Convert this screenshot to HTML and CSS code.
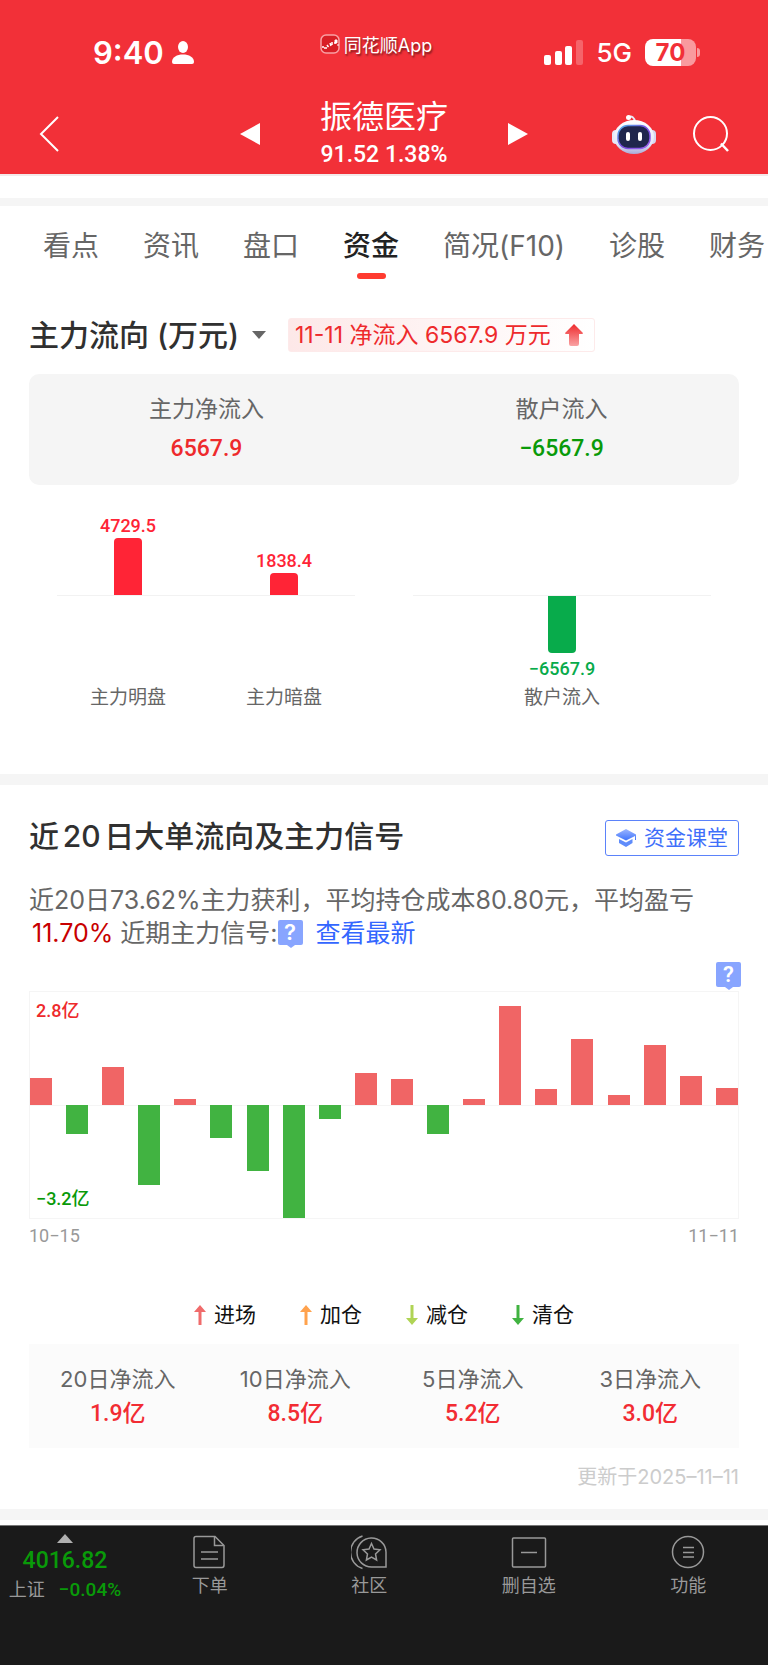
FILE: index.html
```html
<!DOCTYPE html>
<html lang="zh-CN">
<head>
    <meta charset="UTF-8">
    <meta name="viewport" content="width=device-width, initial-scale=1.0">
    <title>振德医疗 - 资金</title>
    <link rel="stylesheet" href="styles.css">
</head>
<body>
    <header class="header">
        <div class="status">
            <div class="status-left">
                <span class="time">9:40</span>
                <svg width="22" height="24" viewBox="0 0 22 24" fill="#fff">
                    <ellipse cx="11" cy="6" rx="5" ry="6"/>
                    <path d="M0 21C0 16 5 13.500 11 13.500S22 16 22 21Q22 23 20 23H2Q0 23 0 21Z"/>
                </svg>
            </div>
            <div class="app">
                <svg width="20" height="20" viewBox="0 0 20 20" fill="none">
                    <rect x="1" y="1" width="18" height="18" rx="5" fill="#d81e26" stroke="#f9a0a4" stroke-width="1.500"/>
                    <path d="M2 13h2M4 14h3M7 11l1.500 2M10 9l1 3M12 8v3M14 9h2" stroke="#fff" stroke-width="1.500"/>
                    <path d="M15 6h2v3h-2zM18 10v2" fill="#fff" stroke="#fff"/>
                </svg>
                <span>同花顺App</span>
            </div>
            <div class="status-right">
                <svg width="39" height="26" viewBox="0 0 39 26" fill="#fff">
                    <rect x="0" y="15" width="7" height="10" rx="2"/>
                    <rect x="11" y="11" width="7" height="14" rx="2"/>
                    <rect x="21" y="6" width="7" height="19" rx="2"/>
                    <rect x="32" y="0" width="7" height="25" rx="2" opacity=".25"/>
                </svg>
                <span class="net">5G</span>
                <div class="battery"><span>70</span></div>
            </div>
        </div>
        <div class="titlebar">
            <button class="icon-btn back" aria-label="返回">
                <svg width="20" height="36" viewBox="0 0 20 36" fill="none" stroke="#fff" stroke-width="2">
                    <path d="M19 1L2 18L19 35"/>
                </svg>
            </button>
            <div class="stock">
                <button class="icon-btn" aria-label="上一只">
                    <svg width="20" height="24" viewBox="0 0 20 24" fill="#fff"><path d="M20 1V23L0 12Z"/></svg>
                </button>
                <div class="stock-info">
                    <h1>振德医疗</h1>
                    <p>91.52 1.38%</p>
                </div>
                <button class="icon-btn" aria-label="下一只">
                    <svg width="20" height="24" viewBox="0 0 20 24" fill="#fff"><path d="M0 1V23L20 12Z"/></svg>
                </button>
            </div>
            <div class="actions">
                <button class="icon-btn" aria-label="智能助手">
                    <svg width="44" height="40" viewBox="0 0 44 40">
                        <defs>
                            <linearGradient id="shell" x1="0" y1="0" x2="0" y2="1">
                                <stop offset="0" stop-color="#fff"/>
                                <stop offset=".7" stop-color="#e4e6f8"/>
                                <stop offset="1" stop-color="#a9abd6"/>
                            </linearGradient>
                            <linearGradient id="rim" x1="0" y1="0" x2="1" y2="1">
                                <stop offset="0" stop-color="#4fb7e8"/>
                                <stop offset=".5" stop-color="#7a4be0"/>
                                <stop offset="1" stop-color="#9a63f0"/>
                            </linearGradient>
                        </defs>
                        <path d="M16 3Q22 1 23 8" fill="none" stroke="#e8e9f7" stroke-width="2"/>
                        <circle cx="16.500" cy="3.500" r="2.500" fill="#fff"/>
                        <rect x="0" y="16" width="8" height="14" rx="4" fill="#e6e8f8"/>
                        <rect x="36" y="16" width="8" height="14" rx="4" fill="#d5d8f0"/>
                        <ellipse cx="22" cy="23" rx="20" ry="17" fill="url(#shell)"/>
                        <rect x="6" y="11.500" width="32" height="23" rx="10" fill="#20264d" stroke="url(#rim)" stroke-width="1.500"/>
                        <rect x="14" y="18" width="4" height="9" rx="2" fill="#fff"/>
                        <rect x="26" y="18" width="4" height="9" rx="2" fill="#fff"/>
                    </svg>
                </button>
                <button class="icon-btn" aria-label="搜索">
                    <svg width="36" height="36" viewBox="0 0 36 36" fill="none" stroke="#fff" stroke-width="2">
                        <circle cx="17.500" cy="17.500" r="16.500"/>
                        <path d="M28 27.500L35 35" stroke-width="2.500"/>
                    </svg>
                </button>
            </div>
        </div>
    </header>

    <div class="strip"></div>
    <div class="band band-thin"></div>

    <nav class="tabs">
        <a href="#">看点</a>
        <a href="#">资讯</a>
        <a href="#">盘口</a>
        <a href="#" class="active">资金</a>
        <a href="#">简况(F10)</a>
        <a href="#">诊股</a>
        <a href="#">财务</a>
    </nav>

    <section class="flow">
        <div class="flow-head">
            <div class="picker">
                <select aria-label="主力流向">
                    <option>主力流向 (万元)</option>
                </select>
                <span class="caret"></span>
            </div>
            <div class="tag">
                <span>11-11 净流入 6567.9 万元</span>
                <svg width="18" height="22" viewBox="0 0 18 22">
                    <defs>
                        <linearGradient id="up" x1="0" y1="0" x2="0" y2="1">
                            <stop offset="0" stop-color="#ee2a2c"/>
                            <stop offset="1" stop-color="#f9a3a4"/>
                        </linearGradient>
                    </defs>
                    <path d="M9 0L18 9Q18 10 17 10H14V20Q14 22 12 22H6Q4 22 4 20V10H1Q0 10 0 9Z" fill="url(#up)"/>
                </svg>
            </div>
        </div>

        <div class="summary">
            <div>
                <p class="label">主力净流入</p>
                <p class="num red">6567.9</p>
            </div>
            <div>
                <p class="label">散户流入</p>
                <p class="num green">−6567.9</p>
            </div>
        </div>

        <div class="compare">
            <div class="compare-group">
                <div class="col">
                    <div class="up"><span>4729.5</span><i style="height:57px"></i></div>
                    <div class="down"></div>
                    <p>主力明盘</p>
                </div>
                <div class="col">
                    <div class="up"><span>1838.4</span><i style="height:22px"></i></div>
                    <div class="down"></div>
                    <p>主力暗盘</p>
                </div>
            </div>
            <div class="compare-group single">
                <div class="col">
                    <div class="up"></div>
                    <div class="down"><i style="height:57px"></i><span>−6567.9</span></div>
                    <p>散户流入</p>
                </div>
            </div>
        </div>
    </section>

    <div class="band"></div>

    <section class="signal">
        <div class="signal-head">
            <h2>近20日大单流向及主力信号</h2>
            <a class="course" href="#">
                <svg width="20" height="18" viewBox="0 0 20 18">
                    <defs>
                        <linearGradient id="cap" x1="0" y1="0" x2="0" y2="1">
                            <stop offset="0" stop-color="#9db6ff"/>
                            <stop offset="1" stop-color="#3f74fb"/>
                        </linearGradient>
                    </defs>
                    <path d="M10 0L20 5.500V11H19V7L10 11.500L0 6.500V5.500Z" fill="url(#cap)"/>
                    <path d="M3 10L10 13.500L16.500 10V14L10 18L3 14Z" fill="#5f8cfb"/>
                </svg>
                <span>资金课堂</span>
            </a>
        </div>

        <p class="desc">近20日73.62%主力获利，平均持仓成本80.80元，平均盈亏 <span class="profit">11.70%</span> 近期主力信号:<button class="help" aria-label="信号说明">?</button><a href="#">查看最新</a></p>

        <div class="chart">
            <span class="max">2.8亿</span>
            <span class="min">−3.2亿</span>
            <button class="help help-float" aria-label="图表说明">?</button>
            <div class="bars">
                <div class="pos"><i style="height:24%"></i></div>
                <div class="neg"><i style="height:26%"></i></div>
                <div class="pos"><i style="height:34%"></i></div>
                <div class="neg"><i style="height:71%"></i></div>
                <div class="pos"><i style="height:5%"></i></div>
                <div class="neg"><i style="height:29%"></i></div>
                <div class="neg"><i style="height:58%"></i></div>
                <div class="neg"><i style="height:100%"></i></div>
                <div class="neg"><i style="height:12%"></i></div>
                <div class="pos"><i style="height:28%"></i></div>
                <div class="pos"><i style="height:23%"></i></div>
                <div class="neg"><i style="height:26%"></i></div>
                <div class="pos"><i style="height:5%"></i></div>
                <div class="pos"><i style="height:88%"></i></div>
                <div class="pos"><i style="height:14%"></i></div>
                <div class="pos"><i style="height:58%"></i></div>
                <div class="pos"><i style="height:9%"></i></div>
                <div class="pos"><i style="height:53%"></i></div>
                <div class="pos"><i style="height:26%"></i></div>
                <div class="pos"><i style="height:15%"></i></div>
            </div>
        </div>
        <div class="dates">
            <span>10−15</span>
            <span>11−11</span>
        </div>

        <ul class="legend">
            <li class="enter"><svg width="12" height="20" viewBox="0 0 12 20"><path d="M6 0L12 7H7.500V20H4.500V7H0Z"/></svg>进场</li>
            <li class="add"><svg width="12" height="20" viewBox="0 0 12 20"><path d="M6 0L12 7H7.500V20H4.500V7H0Z"/></svg>加仓</li>
            <li class="reduce"><svg width="12" height="20" viewBox="0 0 12 20"><path d="M6 20L12 13H7.500V0H4.500V13H0Z"/></svg>减仓</li>
            <li class="clear"><svg width="12" height="20" viewBox="0 0 12 20"><path d="M6 20L12 13H7.500V0H4.500V13H0Z"/></svg>清仓</li>
        </ul>

        <table class="totals">
            <thead>
                <tr>
                    <th>20日净流入</th>
                    <th>10日净流入</th>
                    <th>5日净流入</th>
                    <th>3日净流入</th>
                </tr>
            </thead>
            <tbody>
                <tr>
                    <td>1.9亿</td>
                    <td>8.5亿</td>
                    <td>5.2亿</td>
                    <td>3.0亿</td>
                </tr>
            </tbody>
        </table>
        <p class="updated">更新于2025–11–11</p>
    </section>

    <div class="band"></div>

    <footer class="toolbar">
        <a class="index" href="#">
            <span class="index-caret"></span>
            <span class="index-value">4016.82</span>
            <span class="index-row"><span>上证</span><b>−0.04%</b></span>
        </a>
        <a class="tool" href="#">
            <svg width="36" height="36" viewBox="0 0 36 36">
                <path d="M4 2.500H23L32 11.500V31Q32 33.500 30 33.500H4Q2 33.500 2 31.500V4.500Q2 2.500 4 2.500Z"/>
                <path d="M22.500 3V11.500H31.500M9 18H26M9 25H26"/>
            </svg>
            <span>下单</span>
        </a>
        <a class="tool" href="#">
            <svg width="36" height="36" viewBox="0 0 36 36">
                <path d="M21 33H35V18A14.500 14.500 0 1 0 21 33Z"/>
                <path d="M11.500 2A17 17 0 0 0 11.500 34.500"/>
                <path d="M20.500 9.500L23 15L29 15.800L24.500 20L25.600 26L20.500 23L15.400 26L16.500 20L12 15.800L18 15Z"/>
            </svg>
            <span>社区</span>
        </a>
        <a class="tool" href="#">
            <svg width="36" height="36" viewBox="0 0 36 36">
                <rect x="1.500" y="4" width="33" height="29" rx="1"/>
                <path d="M10 18.500H26"/>
            </svg>
            <span>删自选</span>
        </a>
        <a class="tool" href="#">
            <svg width="36" height="36" viewBox="0 0 36 36">
                <circle cx="18" cy="18" r="15.500"/>
                <path d="M13 13.500H24M13 18.500H24M13 23H24"/>
            </svg>
            <span>功能</span>
        </a>
    </footer>
</body>
</html>
```
FILE: styles.css
```css
*{
    margin: 0;
    padding: 0;
    box-sizing: border-box;
}
body{
    display: flex;
    flex-direction: column;
    min-height: 100vh;
    background: #fff;
    color: #666;
    font-family: Inter, "Noto Sans CJK SC", sans-serif;
    font-size: 22px;
}
a{
    color: inherit;
    text-decoration: none;
}
svg{
    display: block;
    flex-shrink: 0;
}
button{
    border: none;
    background: none;
    font-family: inherit;
}

/* header */
.header{
    background: #f23038;
    color: #fff;
}
.status{
    display: grid;
    grid-template-columns: 1fr auto 1fr;
    padding: 33px 68px 0 52px;
    height: 72px;
}
.status-left, .status-right{
    display: flex;
    align-items: center;
}
.status-left{
    gap: 8px;
    padding-left: 41px;
}
.status-right{
    justify-content: flex-end;
    gap: 13px;
}
.time{
    font-size: 31px;
    font-weight: 600;
}
.app{
    display: flex;
    align-items: center;
    gap: 4px;
    height: 22px;
    font-size: 18px;
    text-shadow: 1px 2px 2px rgba(0, 0, 0, .5);
}
.net{
    font-size: 26px;
    font-weight: 500;
}
.battery{
    position: relative;
    width: 51px;
    height: 27px;
    margin-right: 4px;
    border-radius: 8px;
    background: linear-gradient(90deg, #fff 71%, #f99a9e 71%);
    color: #f23038;
    font-size: 24px;
    font-weight: 700;
    line-height: 27px;
    text-align: center;
}
.battery::after{
    content: "";
    position: absolute;
    top: 9px;
    right: -4px;
    width: 3px;
    height: 9px;
    border-radius: 0 3px 3px 0;
    background: #f99a9e;
}
.titlebar{
    display: grid;
    grid-template-columns: 1fr auto 1fr;
    align-items: center;
    padding: 26px 39px 4px;
}
.back{
    justify-self: start;
}
.stock{
    display: flex;
    align-items: center;
    gap: 60px;
}
.stock-info{
    height: 72px;
    text-align: center;
}
.stock-info h1{
    font-size: 32px;
    font-weight: 400;
    line-height: 38px;
}
.stock-info p{
    margin-top: 4px;
    font-family: Roboto, sans-serif;
    font-size: 23px;
    font-weight: 500;
    line-height: 30px;
}
.actions{
    display: flex;
    align-items: center;
    justify-content: flex-end;
    gap: 37px;
}

.strip{
    height: 24px;
    border-top: 2px solid #f3e9ea;
}
.band{
    height: 11px;
    background: #f5f5f5;
}
.band-thin{
    height: 8px;
}

/* tabs */
.tabs{
    display: flex;
    gap: 44px;
    padding: 20px 0 0 43px;
    overflow: hidden;
    font-size: 28px;
    line-height: 40px;
    white-space: nowrap;
}
.tabs a{
    height: 53px;
}
.tabs .active{
    color: #222;
    font-weight: 500;
}
.tabs .active::after{
    content: "";
    display: block;
    width: 29px;
    height: 6px;
    margin: 7px auto 0;
    border-radius: 3px;
    background: #ff3b30;
}

/* main flow */
.flow{
    padding: 35px 29px 61px;
}
.flow-head{
    display: flex;
    align-items: center;
    gap: 22px;
    height: 42px;
}
.picker{
    position: relative;
}
.picker select{
    appearance: none;
    padding-right: 26px;
    border: none;
    background: none;
    color: #303030;
    font-family: inherit;
    font-size: 30px;
    font-weight: 500;
    line-height: 42px;
}
.caret{
    position: absolute;
    top: 50%;
    right: 0;
    margin-top: -4px;
    border: 7px solid transparent;
    border-top: 8px solid #666;
    border-bottom: none;
    pointer-events: none;
}
.tag{
    display: flex;
    align-items: center;
    gap: 14px;
    height: 34px;
    padding: 0 11px 0 6px;
    border: 1px solid #fdeaea;
    border-radius: 3px;
    background: linear-gradient(90deg, #fde8e8, #fff);
    color: #ee2a2c;
    font-size: 23px;
    line-height: 30px;
    white-space: nowrap;
}
.summary{
    display: grid;
    grid-template-columns: 1fr 1fr;
    margin-top: 18px;
    padding: 20px 0 21px;
    border-radius: 10px;
    background: #f5f5f5;
    text-align: center;
    line-height: 30px;
}
.num{
    margin-top: 10px;
    font-family: Roboto, sans-serif;
    font-size: 23px;
    font-weight: 500;
}
.label{
    font-size: 23px;
}
.red{
    color: #ee2a2c;
}
.green{
    color: #099a09;
}
.compare{
    display: grid;
    grid-template-columns: 1fr 1fr;
    gap: 58px;
    padding: 0 28px;
}
.compare-group{
    display: flex;
    justify-content: space-between;
    padding: 0 33px;
    /* zero axis, 110px below the top of the plot */
    background: linear-gradient(#f2f2f2, #f2f2f2) 0 110px / 100% 1px no-repeat;
}
.single{
    justify-content: center;
}
.col{
    display: flex;
    flex-direction: column;
    width: 76px;
    font-size: 19px;
    line-height: 30px;
    text-align: center;
    white-space: nowrap;
}
.up, .down{
    display: flex;
    flex-direction: column;
    align-items: center;
    font-family: Roboto, sans-serif;
    font-size: 18px;
    font-weight: 500;
    line-height: 24px;
}
.up{
    justify-content: flex-end;
    height: 110px;
    color: #ff2436;
}
.down{
    gap: 4px;
    height: 88px;
    padding-top: 1px;
    color: #08ab4b;
}
.up i, .down i{
    width: 28px;
    background: currentColor;
}
.up i{
    border-radius: 4px 4px 0 0;
}
.down i{
    border-radius: 0 0 4px 4px;
}

/* 20 day signal */
.signal{
    padding: 35px 29px 17px;
}
.signal-head{
    display: flex;
    align-items: flex-start;
    justify-content: space-between;
}
.signal-head h2{
    color: #303030;
    font-size: 30px;
    font-weight: 500;
    line-height: 32px;
    text-autospace: normal;
}
.course{
    display: flex;
    align-items: center;
    gap: 8px;
    height: 36px;
    padding: 0 10px;
    border: 1px solid #5b82fa;
    border-radius: 3px;
    color: #3f6ffa;
    font-size: 21px;
    line-height: 30px;
}
.desc{
    margin-top: 28px;
    font-size: 25px;
    line-height: 33px;
}
.desc .profit{
    margin-left: 3px;
    color: #c80000;
}
.desc a{
    margin-left: 13px;
    color: #3366ff;
}
.help{
    position: relative;
    width: 25px;
    height: 25px;
    border-radius: 2px;
    background: #88a5ff;
    color: #fff;
    font-size: 22px;
    font-weight: 600;
    line-height: 25px;
    vertical-align: 2px;
}
.help::after{
    content: "";
    position: absolute;
    left: 9px;
    bottom: -3px;
    border: 4px solid transparent;
    border-top: 3px solid #88a5ff;
    border-bottom: none;
}
.chart{
    position: relative;
    height: 228px;
    margin-top: 41px;
    border: 1px solid #f5f5f5;
    font-family: Roboto, "Noto Sans CJK SC", sans-serif;
    font-size: 18px;
    font-weight: 500;
    line-height: 24px;
}
.max, .min{
    position: absolute;
    left: 6px;
}
.max{
    top: 7px;
    color: #ee2a2c;
}
.min{
    bottom: 7px;
    color: #099a09;
}
.help-float{
    position: absolute;
    top: -30px;
    right: -3px;
}
.bars{
    display: flex;
    justify-content: space-between;
    height: 100%;
    background: linear-gradient(#f5f5f5, #f5f5f5) 0 50% / 100% 1px no-repeat;
}
.pos, .neg{
    display: flex;
    width: 22px;
    height: 50%;
}
.pos{
    align-items: flex-end;
}
.neg{
    align-self: flex-end;
}
.bars i{
    width: 100%;
}
.pos i{
    background: #f06565;
}
.neg i{
    background: #41b341;
}
.dates{
    display: flex;
    justify-content: space-between;
    color: #999;
    font-family: Roboto, sans-serif;
    font-size: 18px;
    line-height: 33px;
}
.legend{
    display: flex;
    justify-content: center;
    gap: 44px;
    margin-top: 48px;
    list-style: none;
    color: #111;
    font-size: 21px;
    line-height: 30px;
}
.legend li{
    display: flex;
    align-items: center;
    gap: 8px;
}
.enter svg{
    fill: #f06b6b;
}
.add svg{
    fill: #ffa24d;
}
.reduce svg{
    fill: #b0d455;
}
.clear svg{
    fill: #41b341;
}
.totals{
    width: 100%;
    height: 104px;
    margin-top: 14px;
    border-spacing: 0;
    table-layout: fixed;
    background: #fbfbfb;
    text-align: center;
}
.totals th{
    padding-top: 19px;
    font-size: 22px;
    font-weight: 400;
    line-height: 32px;
}
.totals td{
    padding-bottom: 15px;
    color: #f22c33;
    font-family: Roboto, "Noto Sans CJK SC", sans-serif;
    font-size: 23px;
    font-weight: 500;
    line-height: 38px;
}
.updated{
    margin-top: 14px;
    color: #ccc;
    font-size: 20px;
    line-height: 30px;
    text-align: right;
}

/* bottom toolbar */
.toolbar{
    display: flex;
    flex: 1;
    margin-top: 5px;
    padding-top: 8px;
    border-top: 1px solid #777;
    background: #1a1a1a;
    color: #999;
    font-size: 18px;
}
.index{
    display: flex;
    flex-direction: column;
    align-items: center;
    width: 130px;
}
.index-caret{
    border: 8px solid transparent;
    border-bottom: 9px solid #b0b0b0;
    border-top: none;
}
.index-value{
    color: #099a09;
    font-family: Roboto, sans-serif;
    font-size: 23px;
    font-weight: 500;
    line-height: 36px;
}
.index-row{
    display: flex;
    gap: 14px;
    line-height: 22px;
    white-space: nowrap;
}
.index-row b{
    color: #099a09;
    font-family: Roboto, sans-serif;
    font-size: 19px;
    font-weight: 500;
}
.tool{
    display: flex;
    flex: 1;
    flex-direction: column;
    align-items: center;
    gap: 4px;
    line-height: 24px;
}
.tool svg{
    fill: none;
    stroke: #999;
    stroke-width: 1.5;
}
```
